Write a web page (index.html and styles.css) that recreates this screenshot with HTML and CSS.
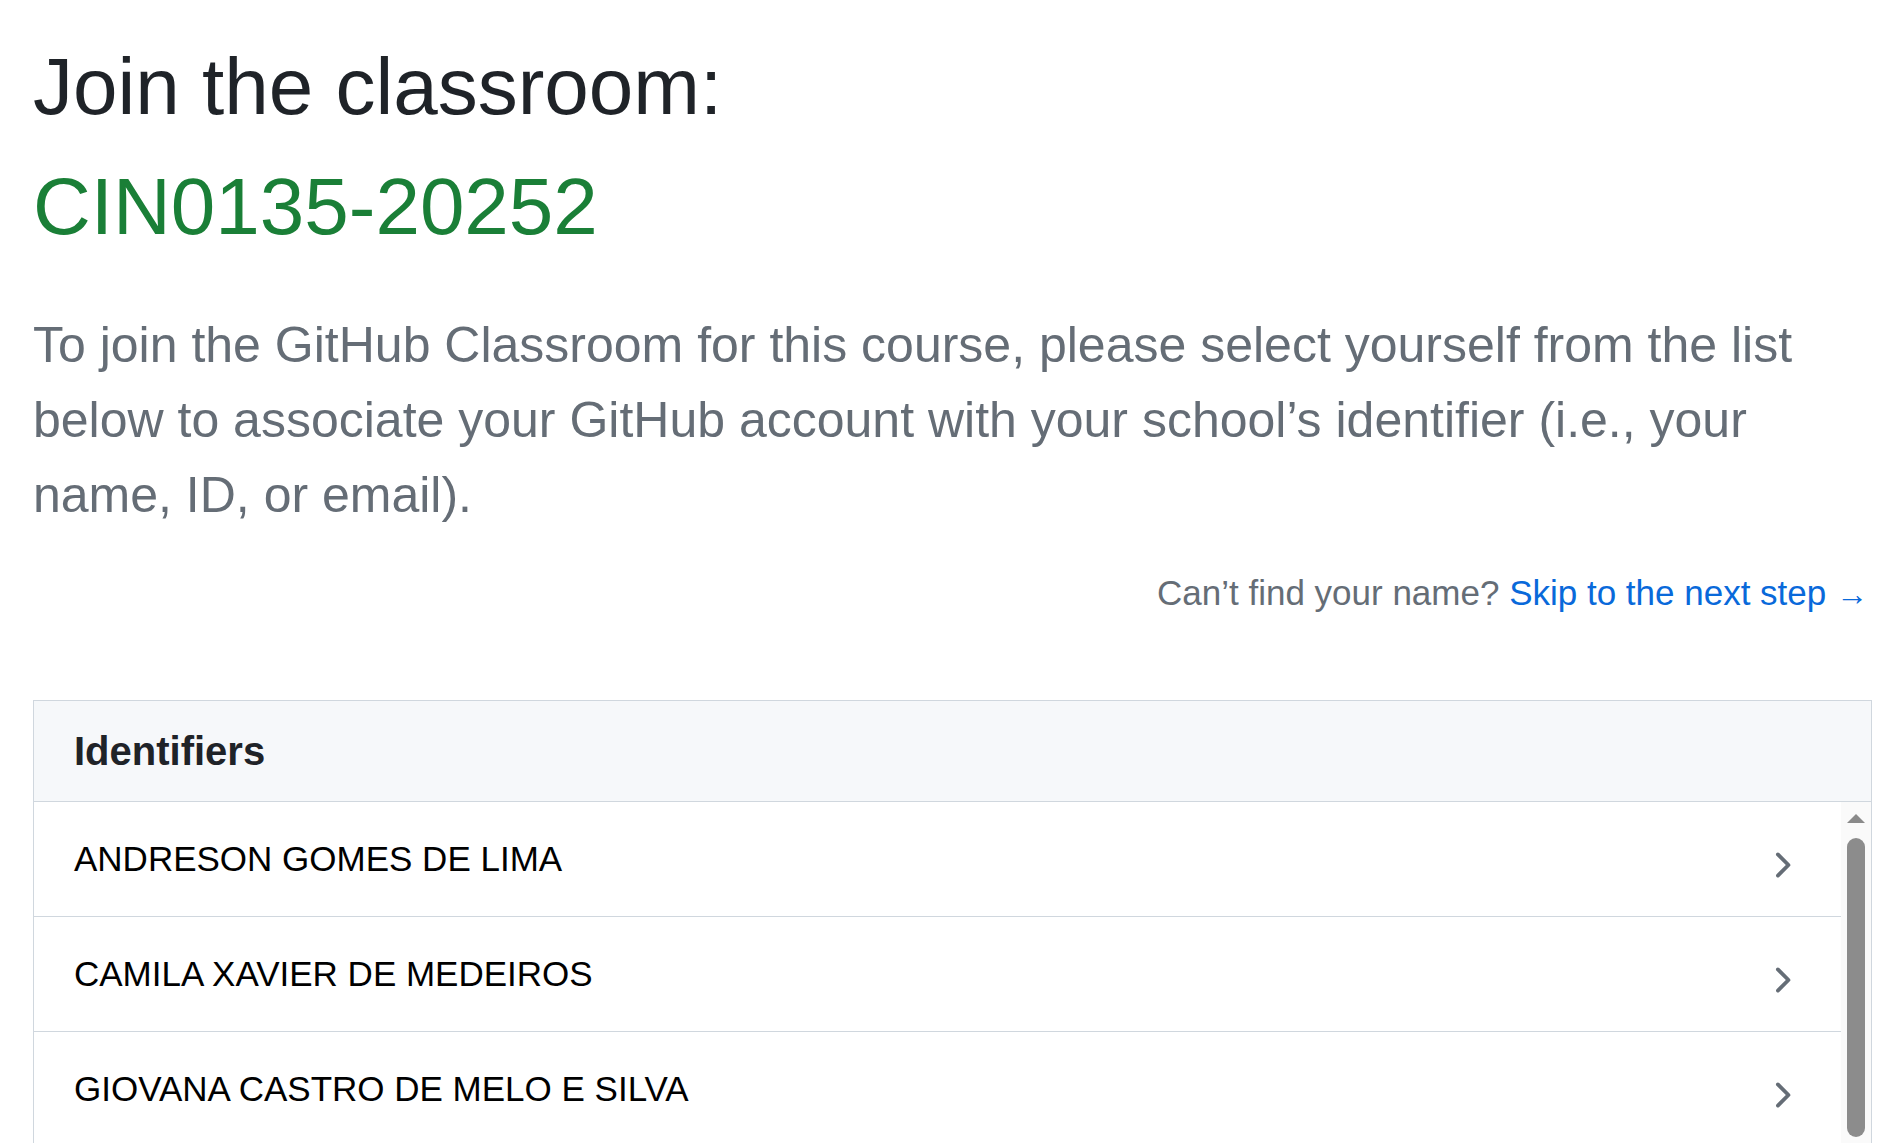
FILE: index.html
```html
<!DOCTYPE html>
<html lang="en">
<head>
<meta charset="utf-8">
<title>Join the classroom</title>
<link rel="stylesheet" href="styles.css">
</head>
<body>
<main class="page">
  <h1 class="title">Join the classroom:</h1>
  <h2 class="classroom-name">CIN0135-20252</h2>
  <p class="lead">To join the GitHub Classroom for this course, please select yourself from the list below to associate your GitHub account with your school’s identifier (i.e., your name, ID, or email).</p>
  <p class="skip">Can’t find your name? <a class="skip-link" href="#">Skip to the next step <span class="arrow">→</span></a></p>

  <section class="box">
    <div class="box-header">
      <h3 class="box-title">Identifiers</h3>
    </div>
    <div class="box-body">
      <ul class="roster">
        <li class="roster-item">
          <span class="roster-name">ANDRESON GOMES DE LIMA</span>
          <svg class="chevron" viewBox="0 0 16 16" width="40" height="40" aria-hidden="true"><path d="M6.22 3.22a.75.75 0 0 1 1.06 0l4.25 4.25a.75.75 0 0 1 0 1.06l-4.25 4.25a.751.751 0 0 1-1.042-.018.751.751 0 0 1-.018-1.042L9.94 8 6.22 4.28a.75.75 0 0 1 0-1.06Z"/></svg>
        </li>
        <li class="roster-item">
          <span class="roster-name">CAMILA XAVIER DE MEDEIROS</span>
          <svg class="chevron" viewBox="0 0 16 16" width="40" height="40" aria-hidden="true"><path d="M6.22 3.22a.75.75 0 0 1 1.06 0l4.25 4.25a.75.75 0 0 1 0 1.06l-4.25 4.25a.751.751 0 0 1-1.042-.018.751.751 0 0 1-.018-1.042L9.94 8 6.22 4.28a.75.75 0 0 1 0-1.06Z"/></svg>
        </li>
        <li class="roster-item">
          <span class="roster-name">GIOVANA CASTRO DE MELO E SILVA</span>
          <svg class="chevron" viewBox="0 0 16 16" width="40" height="40" aria-hidden="true"><path d="M6.22 3.22a.75.75 0 0 1 1.06 0l4.25 4.25a.75.75 0 0 1 0 1.06l-4.25 4.25a.751.751 0 0 1-1.042-.018.751.751 0 0 1-.018-1.042L9.94 8 6.22 4.28a.75.75 0 0 1 0-1.06Z"/></svg>
        </li>
      </ul>
      <div class="scrollbar" aria-hidden="true">
        <span class="scroll-up"></span>
        <span class="scroll-thumb"></span>
      </div>
    </div>
  </section>
</main>
</body>
</html>
```

FILE: styles.css
```css
html, body {
  margin: 0;
  padding: 0;
  background: #ffffff;
  overflow: hidden;
}

body {
  font-family: "Liberation Sans", Arial, sans-serif;
  color: #1f2328;
}

.page {
  padding: 37px 30px 0 33px;
}

.title {
  margin: 0;
  font-size: 80px;
  line-height: 100px;
  font-weight: 400;
  color: #1f2328;
}

.classroom-name {
  margin: 20px 0 0;
  font-size: 80px;
  line-height: 100px;
  font-weight: 400;
  color: #1a7f37;
}

.lead {
  margin: 51px 0 0;
  font-size: 50px;
  line-height: 75px;
  color: #656d76;
}

.skip {
  margin: 34px 0 0;
  padding-right: 4px;
  font-size: 35px;
  line-height: 52px;
  text-align: right;
  color: #656d76;
}

.skip-link {
  color: #0969da;
  text-decoration: none;
}

.arrow {
  font-size: 32px;
}

.box {
  margin-top: 80px;
  border: 1px solid #d0d7de;
  border-bottom: 0;
}

.box-header {
  padding: 25px 40px;
  background: #f6f8fa;
  border-bottom: 1px solid #d0d7de;
}

.box-title {
  margin: 0;
  font-size: 40px;
  line-height: 50px;
  font-weight: 700;
  color: #1f2328;
}

.box-body {
  display: flex;
  height: 400px;
}

.roster {
  flex: 1;
  margin: 0;
  padding: 0;
  list-style: none;
}

.roster-item {
  display: flex;
  align-items: center;
  justify-content: space-between;
  padding: 31px 40px;
  border-bottom: 1px solid #d0d7de;
}

.roster-name {
  font-size: 35px;
  line-height: 52px;
  color: #000000;
}

.chevron {
  margin-top: 12px;
  fill: #656d76;
  flex: none;
}

.scrollbar {
  flex: none;
  width: 30px;
  display: flex;
  flex-direction: column;
  align-items: center;
  background: #fafafa;
}

.scroll-up {
  margin-top: 12px;
  width: 0;
  height: 0;
  border-left: 9px solid transparent;
  border-right: 9px solid transparent;
  border-bottom: 9px solid #8a8a8a;
}

.scroll-thumb {
  margin-top: 15px;
  width: 18px;
  height: 299px;
  border-radius: 9px;
  background: #8c8c8c;
}
```
